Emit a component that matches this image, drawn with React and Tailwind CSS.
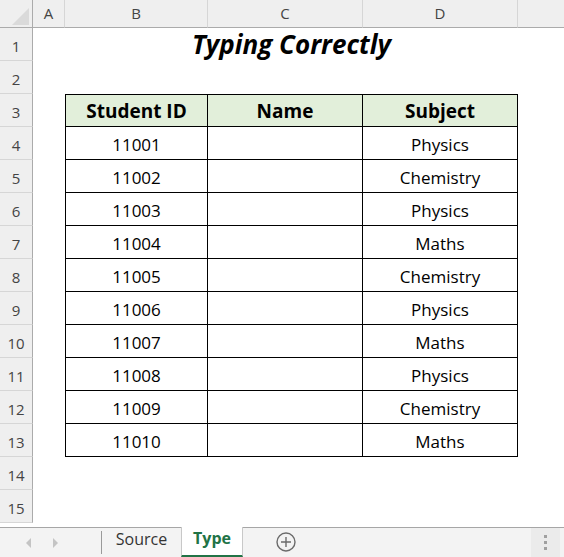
import React from 'react';

const rows = [
  ['11001', 'Physics'],
  ['11002', 'Chemistry'],
  ['11003', 'Physics'],
  ['11004', 'Maths'],
  ['11005', 'Chemistry'],
  ['11006', 'Physics'],
  ['11007', 'Maths'],
  ['11008', 'Physics'],
  ['11009', 'Chemistry'],
  ['11010', 'Maths'],
];

const font = { fontFamily: '"Open Sans", "Liberation Sans", sans-serif' };

function ColHead({ label, last }) {
  return (
    <div className={`flex items-center justify-center border-b border-[#ababab] bg-[#efefef] text-[15px] text-[#444] ${last ? '' : 'border-r border-r-[#d6d6d6]'}`}>
      {label}
    </div>
  );
}

function RowHead({ n }) {
  return (
    <div className="flex items-center justify-center border-r border-b border-[#d6d6d6] border-r-[#ababab] bg-[#efefef] pt-1 text-[15px] text-[#444]">
      {n}
    </div>
  );
}

export default function App() {
  return (
    <div className="h-[557px] w-[564px] overflow-hidden bg-white" style={font}>
      <div className="grid h-[527px] grid-cols-[33px_32px_143px_155px_155px_1fr] grid-rows-[28px_repeat(15,33px)] overflow-hidden">
        <div className="flex items-end justify-end border-r border-b border-[#ababab] bg-[#efefef] pr-[3px] pb-[2px]">
          <svg width="17" height="17" viewBox="0 0 17 17">
            <path d="M17 0L17 17L0 17Z" fill="#dadada" />
          </svg>
        </div>
        <ColHead label="A" />
        <ColHead label="B" />
        <ColHead label="C" />
        <ColHead label="D" />
        <div className="border-b border-[#ababab] bg-[#efefef]" />

        {/* row 1 */}
        <RowHead n={1} />
        <div />
        <div className="col-span-3 flex items-center justify-center text-[26px] font-bold italic text-black">
          Typing Correctly
        </div>
        <div />

        {/* row 2 */}
        <RowHead n={2} />
        <div />
        <div />
        <div />
        <div />
        <div />

        {/* row 3 header */}
        <RowHead n={3} />
        <div />
        <div className="flex items-center justify-center border border-black bg-[#e2efda] pt-0.5 text-[19px] font-bold text-black">Student ID</div>
        <div className="flex items-center justify-center border-y border-r border-black bg-[#e2efda] pt-0.5 text-[19px] font-bold text-black">Name</div>
        <div className="flex items-center justify-center border-y border-r border-black bg-[#e2efda] pt-0.5 text-[19px] font-bold text-black">Subject</div>
        <div />

        {rows.map(([id, subject], i) => (
          <React.Fragment key={id}>
            <RowHead n={i + 4} />
            <div />
            <div className="flex items-center justify-center border-x border-b border-black pt-1 text-[17px] text-black">{id}</div>
            <div className="border-r border-b border-black" />
            <div className="flex items-center justify-center border-r border-b border-black pt-1 text-[17px] text-black">{subject}</div>
            <div />
          </React.Fragment>
        ))}

        <RowHead n={14} />
        <div />
        <div />
        <div />
        <div />
        <div />

        <RowHead n={15} />
        <div />
        <div />
        <div />
        <div />
        <div />
      </div>

      <div className="flex h-[30px] items-stretch border-t border-[#a6a6a6] bg-[#f3f3f3]">
        <div className="my-[3px] flex w-[102px] items-center border-r border-[#9a9a9a]">
          <span className="ml-[26px] h-0 w-0 border-y-[5px] border-r-[5px] border-y-transparent border-r-[#c4c4c4]" />
          <span className="ml-[22px] h-0 w-0 border-y-[5px] border-l-[5px] border-y-transparent border-l-[#c4c4c4]" />
        </div>
        <div className="flex w-[79px] items-center justify-center pb-2 text-[16px] text-[#333]">Source</div>
        <div className="-mt-px flex w-[62px] items-center justify-center border-x border-[#c8c8c8] border-b-2 border-b-[#217346] bg-white pb-1.5 text-[16px] font-bold text-[#217346]">
          Type
        </div>
        <div className="flex items-center pl-[33px] pb-0.5">
          <svg width="20" height="20" viewBox="0 0 20 20" fill="none" stroke="#6b6b6b" strokeWidth="1.4">
            <circle cx="10" cy="10" r="9" />
            <path d="M10 5v10M5 10h10" />
          </svg>
        </div>
        <div className="flex-1" />
        <div className="flex w-[29px] flex-col items-center justify-center gap-[3px] bg-[#ebebeb]">
          <span className="h-[3px] w-[3px] bg-[#a0a0a0]" />
          <span className="h-[3px] w-[3px] bg-[#a0a0a0]" />
          <span className="h-[3px] w-[3px] bg-[#a0a0a0]" />
        </div>
        <div className="w-[4px]" />
      </div>
    </div>
  );
}
